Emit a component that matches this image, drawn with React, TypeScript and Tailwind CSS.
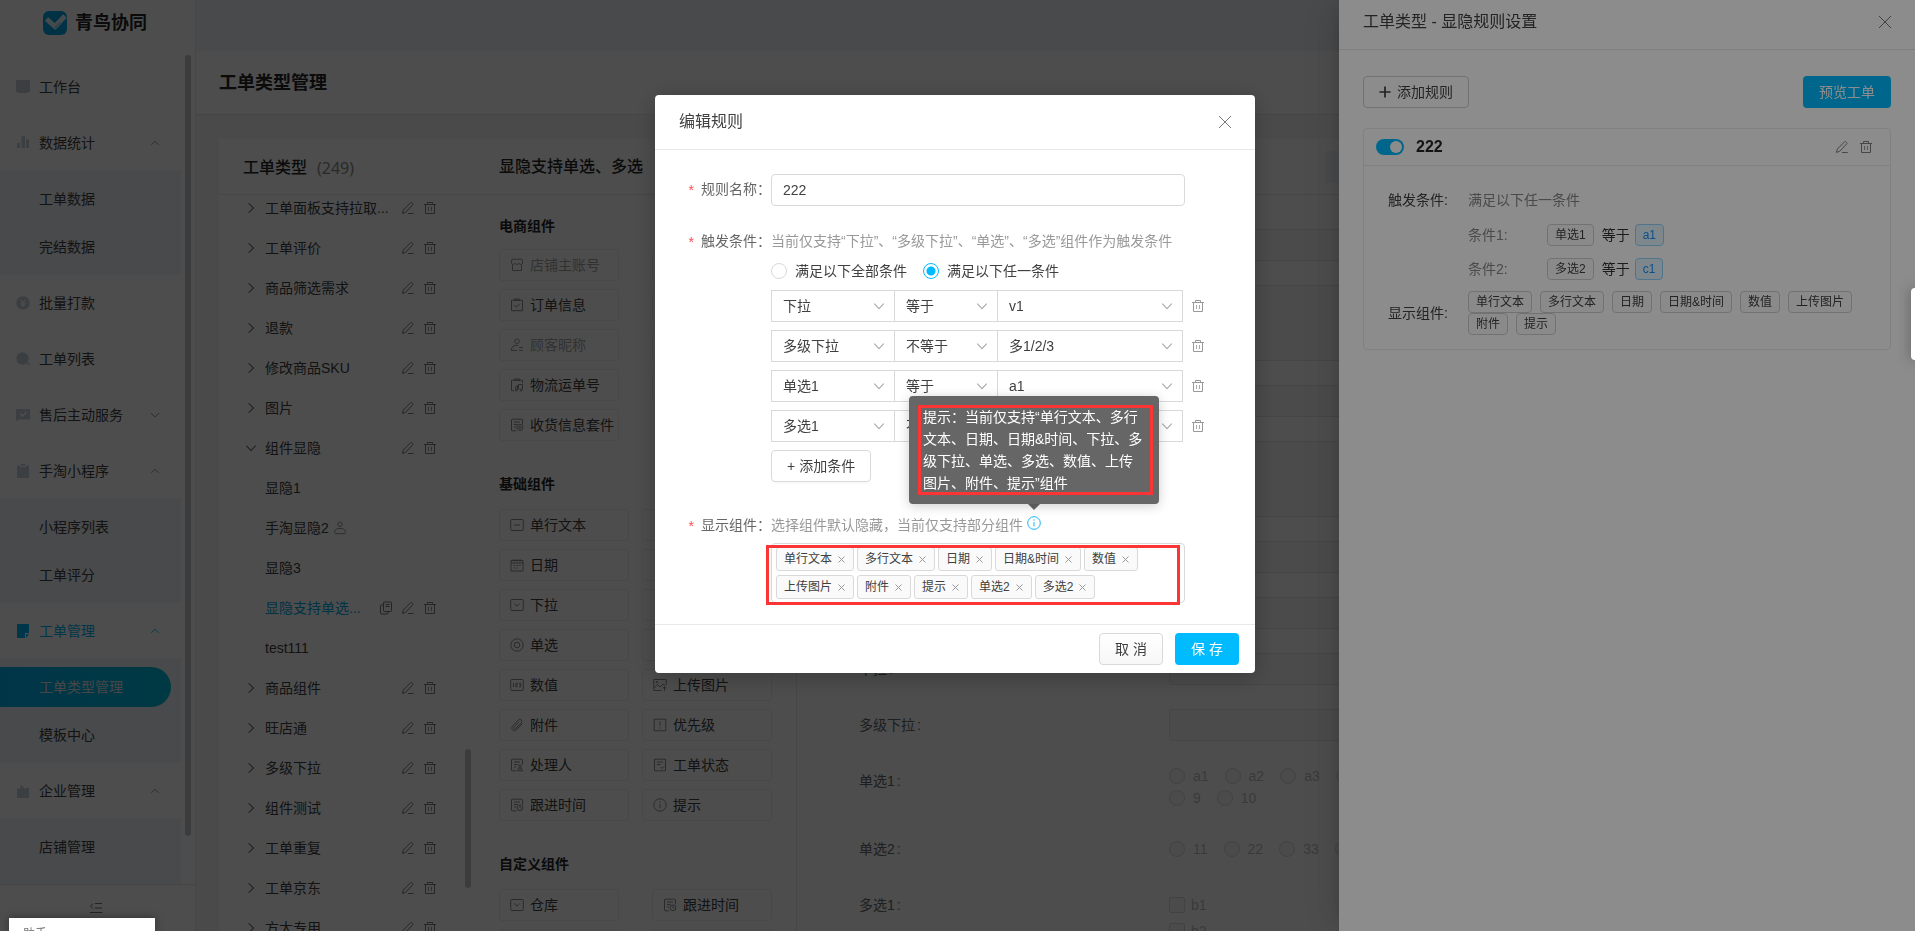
import React, { useState } from 'react';

type IconProps = { className?: string };

const Svg = ({ className = 'size-3.5', children, box = 14 }: { className?: string; children: React.ReactNode; box?: number }) => (
  <svg viewBox={`0 0 ${box} ${box}`} className={`shrink-0 ${className}`} fill="none" stroke="currentColor" strokeWidth="1" aria-hidden="true">
    {children}
  </svg>
);

const EditIcon = ({ className }: IconProps) => (
  <Svg className={className}>
    <path d="M1.4 12.4 2.4 9 9.600 1.700q.6-.6 1.200 0l.9.9q.6.6 0 1.200L4.700 11.300 1.400 12.400ZM7 12.500h5.700" />
  </Svg>
);
const TrashIcon = ({ className }: IconProps) => (
  <Svg className={className}>
    <path d="M1 3.500h12M2.500 3.500v9h9v-9M4.500 3.300V1.500h5v1.800" />
    <path d="M5.500 6v4M8.500 6v4" strokeOpacity=".8" />
  </Svg>
);
const CopyIcon = ({ className }: IconProps) => (
  <Svg className={className}>
    <path d="M5.500 1h6q1 0 1 1v7.500q0 1-1 1h-6q-1 0-1-1V2q0-1 1-1Z" />
    <path d="M4 4H2.500q-1 0-1 1v7q0 1 1 1h5.500q1 0 1-1v-1.300M6.500 3.500h4M6.500 5.500h4" />
  </Svg>
);
const UserIcon = ({ className }: IconProps) => (
  <Svg className={className}>
    <circle cx="7" cy="3.300" r="2.200" />
    <path d="M4.500 7.500h5q3 1 3 4 0 1.200-1.200 1.200H2.700q-1.200 0-1.200-1.200 0-3 3-4Z" />
  </Svg>
);
const Chevron = ({ className = 'size-3', dir }: IconProps & { dir: 'up' | 'down' | 'right' }) => (
  <Svg className={className}>
    <path
      strokeWidth="1.300"
      d={dir === 'up' ? 'M2 9.500 7 4.500l5 5' : dir === 'down' ? 'M1.500 4.200 7 10l5.500-5.800' : 'M4.200 1.500 10 7l-5.800 5.500'}
    />
  </Svg>
);
const CloseIcon = ({ className }: IconProps) => (
  <Svg className={className}>
    <path d="M1 1l12 12M13 1 1 13" />
  </Svg>
);
const InfoIcon = ({ className }: IconProps) => (
  <Svg className={className}>
    <circle cx="7" cy="7" r="6.300" />
    <path d="M7 6v4.500M7 3.300v1.400" />
  </Svg>
);

const sheet = 'M12.500 6.500V2q0-.8-.8-.8H2.300q-.8 0-.8.8v10q0 .8.8.8h4M4 4h6M4 6.500h3.500M4 9h2';
const glyphs: Record<string, React.ReactNode> = {
  shop: <path d="M2.500 7v5.500h9V7M2 1.200h10l.8 3.600q-.4 1.700-2 1.700T8.900 5.200Q8.300 6.500 7 6.500T5.100 5.200Q4.600 6.500 3.200 6.500t-2-1.700Z" />,
  order: <path d="M1.500 2.200h11v10.500h-11ZM4.500 1h5v1.500h-5ZM4.300 7.200l2 2 3.500-3.500" />,
  customer: (
    <>
      <circle cx="7" cy="3.200" r="2.300" />
      <path d="M8 7.300H5Q1.200 8.300 1.200 12.500H7M9 9.500h4M9 12.300h4" />
    </>
  ),
  logistics: (
    <>
      <path d="M12.500 5V2.200h-11v10.500H4M4.500 1h5v1.500h-5Z" />
      <path d="M5.500 11.500V9l2-1.500V11M8.500 11.500v-5h4v5" />
      <circle cx="6.500" cy="12" r="1" />
      <circle cx="11" cy="12" r="1" />
    </>
  ),
  address: (
    <>
      <path d={sheet} />
      <circle cx="10" cy="9.500" r="3" />
      <circle cx="10" cy="9.500" r="1" />
    </>
  ),
  text: (
    <>
      <rect x=".7" y="1.500" width="12.600" height="11" rx="1" />
      <path d="M4 7h6" />
    </>
  ),
  date: <path d="M1 2.500h12v10.500H1ZM1 5h12M4 1v2.500M7 1v2.500M10 1v2.500M3.500 7.500H5M6.300 7.500h1.500M9.200 7.500h1.500M3.500 10H5M6.300 10h1.500" />,
  select: (
    <>
      <rect x=".7" y="1.500" width="12.600" height="11" rx="1" />
      <path d="M4.300 5.500 7 8.200l2.700-2.700" />
    </>
  ),
  radio: (
    <>
      <circle cx="7" cy="7" r="6.200" />
      <circle cx="7" cy="7" r="2.800" />
    </>
  ),
  number: (
    <>
      <rect x=".7" y="1.500" width="12.600" height="11" rx="1" />
      <path d="M3.500 5v4M5.500 5.300h1.800V7H5.700v1.800h1.800M9 5.300h1.800v3.500H9M9.200 7h1.600" />
    </>
  ),
  image: (
    <>
      <path d="M13.200 7V1.500H.8v11h8M1 10l3.500-3.500L7 9l3-3 2 1.500M11.500 13V9M9.700 10.500l1.800-1.800 1.800 1.800" />
      <circle cx="4" cy="4.200" r=".8" />
    </>
  ),
  clip: <path d="M12.300 5.600 6.500 11.700Q4.500 13.500 2.700 12q-1.900-1.800-.2-3.900L8.300 2q1.500-1.300 2.900-.1 1.400 1.400.1 2.900L6 10.300q-.9.700-1.600 0-.7-.800 0-1.600L9.200 3.700" />,
  priority: (
    <>
      <path d="M1.200 1.200h11.600v11.600H1.200Z" />
      <path d="M7 3.500v4.500M7 9.300v1.400" />
    </>
  ),
  handler: (
    <>
      <path d={sheet} />
      <circle cx="10" cy="8.200" r="1.400" />
      <path d="M7.500 12.800q.3-2.600 2.500-2.600t2.600 2.600Z" />
    </>
  ),
  status: <path d="M1.500 1.200h11v11.600h-11ZM4 4h6M4 6.500h3.500M7.500 9l1.500 1.500 2.300-2.300" />,
  time: (
    <>
      <path d={sheet} />
      <circle cx="10" cy="9.800" r="2.900" />
      <path d="M10 8.200v1.800h1.300" />
    </>
  ),
  tip: (
    <>
      <circle cx="7" cy="7" r="6.200" />
      <path d="M7 6v4.500M7 3.300v1.400" />
    </>
  ),
};

const menuGlyphs: Record<string, React.ReactNode> = {
  desk: <path d="M1 0h12q1 0 1 1v10q0 1-1 1h-1v1H2v-1H1q-1 0-1-1V1q0-1 1-1Z" />,
  bars: <path d="M1 7h3v5H1ZM5.500 0h3.500v12H5.500ZM10 3.500h3V12h-3Z" />,
  money: (
    <>
      <circle cx="7" cy="7" r="6.800" />
      <path d="M4.500 3.500 7 6.500l2.500-3M4.500 7h5M4.500 9h5M7 6.500V11" stroke="white" fill="none" />
    </>
  ),
  search: (
    <>
      <circle cx="6.500" cy="6.500" r="6.200" />
      <path d="m10 11 1.500-1.500 2.500 3-.8.800Z" />
    </>
  ),
  message: (
    <>
      <path d="M0 1h14v10.500H3L0 13.500Z" />
      <path d="m4 5.500 2.500 2.500 4-4" stroke="white" strokeWidth="1.500" fill="none" />
    </>
  ),
  clipboard: <path d="M1 1.500h3V3h6V1.500h3V14H1ZM5 0h4v2H5Z" />,
  note: <path d="M1 0h12v9H9v5H1ZM10 10h3l-3 4Z" />,
  company: <path d="M1 14V4l3.500 1V0l4 4.500 4.500-1V14Z" />,
};

type Menu = { name: string; icon: string; arrow?: 'up' | 'down'; active?: boolean; children?: string[] };
const menus: Menu[] = [
  { name: '工作台', icon: 'desk' },
  { name: '数据统计', icon: 'bars', arrow: 'up', children: ['工单数据', '完结数据'] },
  { name: '批量打款', icon: 'money' },
  { name: '工单列表', icon: 'search' },
  { name: '售后主动服务', icon: 'message', arrow: 'down' },
  { name: '手淘小程序', icon: 'clipboard', arrow: 'up', children: ['小程序列表', '工单评分'] },
  { name: '工单管理', icon: 'note', arrow: 'up', active: true, children: ['工单类型管理', '模板中心'] },
  { name: '企业管理', icon: 'company', arrow: 'up', children: ['店铺管理'] },
];

function Sidebar() {
  return (
    <aside className="relative flex w-[196px] shrink-0 flex-col border-r border-[#ececec] bg-white text-sm text-[#404040]">
      <div className="flex h-[55px] shrink-0 items-start gap-2 pt-[11px] pl-[43px]">
        <svg viewBox="0 0 24 24" className="size-6" aria-hidden="true">
          <rect width="24" height="24" rx="6" fill="#00a5e4" />
          <path d="m3.500 8 8.500 7.500L22 5" fill="none" stroke="#e4f7fd" strokeWidth="5" />
          <path d="m12 17.500 6-6" stroke="#a4def5" strokeWidth="3" />
        </svg>
        <span className="text-lg leading-6 font-bold text-[#262626]">青鸟协同</span>
      </div>
      <nav className="min-h-0 flex-1 overflow-hidden pt-1">
        {menus.map((m) => (
          <div key={m.name}>
            <a href="#menu" className={`flex h-14 items-center pl-4 ${m.active ? 'text-[#00b4f0]' : ''}`}>
              <svg viewBox="0 0 14 14" fill="currentColor" className={`mr-[9px] size-3.5 ${m.active ? 'text-[#00b4f0]' : 'text-[#c8d0d8]'}`} aria-hidden="true">
                {menuGlyphs[m.icon]}
              </svg>
              <span className="w-[111px]">{m.name}</span>
              {m.arrow && <Chevron dir={m.arrow} className={`size-2.5 ${m.active ? '' : 'text-[#8c8c8c]'}`} />}
            </a>
            {m.children && (
              <div className={`w-[181px] bg-[#f0f4f9] py-1 ${m.name === '企业管理' ? 'h-[104px]' : ''}`}>
                {m.children.map((c) => (
                  <div key={c} className="flex h-12 items-center">
                    <a
                      href="#sub"
                      className={`flex h-10 w-[171px] items-center rounded-r-full pl-[39px] ${
                        c === '工单类型管理' ? 'bg-linear-to-r from-[#00b0f0] to-[#00bfdf] text-[#e8e8e8]' : ''
                      }`}
                    >
                      {c}
                    </a>
                  </div>
                ))}
              </div>
            )}
          </div>
        ))}
      </nav>
      <div className="flex h-[47px] shrink-0 items-center justify-center border-t border-[#e0e0e0] pr-1 text-[#777]">
        <Svg className="size-3.5">
          <path d="M4 2.500 1.500 5 4 7.500M6 2.500h7M6 7h7M1 11.500h12.500" />
        </Svg>
      </div>
      <div className="absolute top-[55px] right-1 h-[781px] w-1.5 rounded-full bg-[#c8c8c8]" />
    </aside>
  );
}

type Node = { name: string; kind: 'closed' | 'open' | 'leaf'; active?: boolean; user?: boolean };
const tree: Node[] = [
  { name: '工单面板支持拉取...', kind: 'closed' },
  { name: '工单评价', kind: 'closed' },
  { name: '商品筛选需求', kind: 'closed' },
  { name: '退款', kind: 'closed' },
  { name: '修改商品SKU', kind: 'closed' },
  { name: '图片', kind: 'closed' },
  { name: '组件显隐', kind: 'open' },
  { name: '显隐1', kind: 'leaf' },
  { name: '手淘显隐2', kind: 'leaf', user: true },
  { name: '显隐3', kind: 'leaf' },
  { name: '显隐支持单选...', kind: 'leaf', active: true },
  { name: 'test111', kind: 'leaf' },
  { name: '商品组件', kind: 'closed' },
  { name: '旺店通', kind: 'closed' },
  { name: '多级下拉', kind: 'closed' },
  { name: '组件测试', kind: 'closed' },
  { name: '工单重复', kind: 'closed' },
  { name: '工单京东', kind: 'closed' },
  { name: '方太专用', kind: 'closed' },
];

function TypeTree() {
  return (
    <section className="relative flex w-64 shrink-0 flex-col">
      <h2 className="flex h-14 shrink-0 items-center border-b border-[#e8e8e8] pt-0.5 pl-6 text-base font-medium text-[#262626]">
        工单类型<span className="ml-2.5 font-['Noto_Sans'] font-normal text-[#8c8c8c]">(249)</span>
      </h2>
      <ul className="min-h-0 flex-1 overflow-hidden pl-[26px]">
        {tree.map((n, i) => (
          <li key={n.name} className={`flex h-10 items-center text-sm text-[#404040] ${i === 0 ? '-mt-[7px]' : ''}`}>
            <span className="flex w-5 shrink-0 text-[#707070]">
              {n.kind !== 'leaf' && <Chevron dir={n.kind === 'open' ? 'down' : 'right'} className="size-3" />}
            </span>
            <span className={`flex w-[136px] items-center gap-1 whitespace-nowrap ${n.active ? 'text-[#00a8e8]' : ''}`}>
              {n.name}
              {n.user && <UserIcon className="size-3.5 text-[#999]" />}
              {n.active && <CopyIcon className="ml-auto mr-2 size-3.5 text-[#777]" />}
            </span>
            {(n.kind !== 'leaf' || n.active) && (
              <span className="flex gap-2 text-[#808080]">
                <EditIcon className="size-3.5" />
                <TrashIcon className="size-3.5" />
              </span>
            )}
          </li>
        ))}
      </ul>
      <div className="absolute right-1 bottom-[43px] h-[139px] w-1.5 rounded-full bg-[#c8c8c8]" />
    </section>
  );
}

type Part = [string, string, boolean?];
const shopParts: Part[] = [
  ['shop', '店铺主账号', true],
  ['order', '订单信息'],
  ['customer', '顾客昵称', true],
  ['logistics', '物流运单号'],
  ['address', '收货信息套件'],
];
const baseParts: Part[] = [
  ['text', '单行文本'],
  ['date', '日期'],
  ['select', '下拉'],
  ['radio', '单选'],
  ['number', '数值'],
  ['clip', '附件'],
  ['handler', '处理人'],
  ['time', '跟进时间'],
];
const baseRight: (Part | null)[] = [null, null, null, null, ['image', '上传图片'], ['priority', '优先级'], ['status', '工单状态'], ['tip', '提示']];

function PartCard({ part, className }: { part: Part | null; className: string }) {
  return (
    <div className={`flex h-8 items-center rounded-[3px] border border-[#eeeeee] pl-2.5 text-sm ${className} ${part && part[2] ? 'text-[#a6a6a6]' : 'text-[#404040]'}`}>
      {part && (
        <>
          <Svg className={`mr-1.5 size-3.5 ${part[2] ? 'text-[#999]' : 'text-[#8c8c8c]'}`}>{glyphs[part[0]]}</Svg>
          <span className="whitespace-nowrap">{part[1]}</span>
        </>
      )}
    </div>
  );
}

function Palette() {
  return (
    <section className="flex w-[322px] shrink-0 flex-col border-r border-[#e8e8e8]">
      <h2 className="flex h-14 shrink-0 items-center border-b border-[#e8e8e8] pl-6 text-base font-medium whitespace-nowrap text-[#262626]">
        显隐支持单选、多选
      </h2>
      <div className="min-h-0 flex-1 overflow-hidden pt-5 pr-6 pl-6 text-sm">
        <h3 className="mb-3 leading-[22px] font-bold text-[#262626]">电商组件</h3>
        <div className="flex flex-col gap-2">
          {shopParts.map((p, i) => (
            <div key={p[1]} className="flex justify-between">
              <PartCard part={p} className="w-[120px]" />
              {i < 4 && <PartCard part={null} className="w-[120px]" />}
            </div>
          ))}
        </div>
        <h3 className="mt-8 mb-3.5 leading-[22px] font-bold text-[#262626]">基础组件</h3>
        <div className="flex flex-col gap-2">
          {baseParts.map((p, i) => (
            <div key={p[1]} className="flex justify-between">
              <PartCard part={p} className="w-[130px]" />
              <PartCard part={baseRight[i]} className="w-[130px]" />
            </div>
          ))}
        </div>
        <h3 className="mt-8 mb-3.5 leading-[22px] font-bold text-[#262626]">自定义组件</h3>
        <div className="flex flex-col gap-2">
          <div className="flex justify-between">
            <PartCard part={['select', '仓库']} className="w-[120px]" />
            <PartCard part={['time', '跟进时间']} className="w-[120px]" />
          </div>
          <div className="flex justify-between">
            <PartCard part={null} className="w-[120px]" />
            <PartCard part={null} className="w-[120px]" />
          </div>
        </div>
      </div>
    </section>
  );
}

function PreviewRow({ label, children }: { label?: string; children: React.ReactNode }) {
  return (
    <div className="flex">
      <div className="w-[310px] shrink-0 text-sm leading-8 text-[#666]">
        {label}
        {label && <span className="ml-0.5">:</span>}
      </div>
      <div className="flex-1">{children}</div>
    </div>
  );
}

const Field = ({ className = 'h-8' }: IconProps) => <div className={`rounded-[3px] border border-[#e6e6e6] bg-[#f7f7f7] ${className}`} />;

const GhostRadio = ({ text }: { text: string }) => (
  <label className="mr-4 flex items-center gap-2 text-sm leading-[22px] text-[#c0c0c0]">
    <input type="radio" disabled className="size-4 appearance-none rounded-full border border-[#dadada] bg-[#f8f8f8]" />
    {text}
  </label>
);

function Preview() {
  return (
    <section className="flex min-w-0 flex-1 flex-col overflow-hidden">
      <div className="flex h-14 shrink-0 items-center border-b border-[#e8e8e8] pl-[528px]">
        <div className="h-8 w-24 rounded-[3px] bg-[#f0f5fc]" />
      </div>
      <div className="flex flex-col gap-6 pt-[34px] pl-[62px]">
        <PreviewRow><Field /></PreviewRow>
        <PreviewRow><Field className="h-[76px]" /></PreviewRow>
        <PreviewRow><Field /></PreviewRow>
        <PreviewRow><Field className="h-[76px]" /></PreviewRow>
        <PreviewRow><Field /></PreviewRow>
        <PreviewRow><Field /></PreviewRow>
        <PreviewRow label="下拉"><Field /></PreviewRow>
        <PreviewRow label="多级下拉"><Field /></PreviewRow>
        <PreviewRow label="单选1">
          <div className="flex h-[22px]">
            {['a1', 'a2', 'a3', 'a4'].map((t) => <GhostRadio key={t} text={t} />)}
          </div>
          <div className="flex h-[22px]">
            {['9', '10'].map((t) => <GhostRadio key={t} text={t} />)}
          </div>
        </PreviewRow>
        <PreviewRow label="单选2">
          <div className="flex h-8">
            {['11', '22', '33', '44'].map((t) => <GhostRadio key={t} text={t} />)}
          </div>
        </PreviewRow>
        <PreviewRow label="多选1">
          <div className="flex flex-col gap-1 pt-[5px]">
            {['b1', 'b2'].map((t) => (
              <label key={t} className="flex h-[22px] items-center gap-1.5 text-sm text-[#c0c0c0]">
                <input type="checkbox" disabled className="size-4 appearance-none rounded-[2px] border border-[#dadada] bg-[#f8f8f8]" />
                {t}
              </label>
            ))}
          </div>
        </PreviewRow>
      </div>
    </section>
  );
}

const Tag = ({ children, blue }: { children: React.ReactNode; blue?: boolean }) => (
  <span
    className={`h-[22px] rounded-[4px] border px-[7px] text-xs leading-5 whitespace-nowrap ${
      blue ? 'border-[#91d5ff] bg-[#e6f7ff] text-[#1890ff]' : 'border-[#d0d0d0] bg-[#fcfcfc] text-[#404040]'
    }`}
  >
    {children}
  </span>
);

function Drawer() {
  const [on, setOn] = useState(true);
  return (
    <div className="fixed inset-0 flex justify-end bg-black/45">
      <div className="flex w-[576px] flex-col bg-white text-sm text-[#404040] shadow-[-6px_0_16px_-8px_rgba(0,0,0,.15),-9px_0_28px_rgba(0,0,0,.08),-12px_0_48px_16px_rgba(0,0,0,.04)]">
        <header className="flex h-[50px] items-center justify-between border-b border-[#e8e8e8] pr-[23px] pb-1.5 pl-6">
          <h2 className="text-base">工单类型 - 显隐规则设置</h2>
          <button type="button" aria-label="关闭" className="text-[#777]"><CloseIcon className="size-3.5" /></button>
        </header>
        <div className="px-6 pt-[26px]">
          <div className="mb-5 flex justify-between">
            <button type="button" className="flex h-8 items-center gap-1.5 rounded-[4px] border border-[#d0d0d0] px-[15px]">
              <Svg className="size-3"><path d="M7 .5v13M.5 7h13" strokeWidth="2" /></Svg>
              添加规则
            </button>
            <button type="button" className="h-8 rounded-[4px] bg-[#00bbff] px-4 text-white">预览工单</button>
          </div>
          <section className="rounded-[4px] border border-[#ececec]">
            <div className="flex h-[37px] items-center border-b border-[#ececec] pr-[17px] pl-3">
              <button type="button" role="switch" aria-checked={on} aria-label="启用规则" onClick={() => setOn(!on)} className="flex h-4 w-7 items-center justify-end rounded-full bg-[#00bbff] px-0.5">
                <span className="size-3 rounded-full bg-white" />
              </button>
              <h3 className="ml-3 flex-1 text-base font-bold text-[#262626]">222</h3>
              <span className="flex gap-2.5 text-[#808080]">
                <EditIcon className="size-3.5" />
                <TrashIcon className="size-3.5" />
              </span>
            </div>
            <div className="px-6 pt-[23px] pb-3.5">
              <div className="flex">
                <div className="w-20 shrink-0 leading-[22px]">触发条件:</div>
                <div className="text-[#888]">
                  <p className="mb-[13px] leading-[22px]">满足以下任一条件</p>
                  {[['条件1:', '单选1', 'a1'], ['条件2:', '多选2', 'c1']].map(([n, a, b]) => (
                    <div key={n} className="mb-3 flex leading-[22px]">
                      <span className="w-[79px]">{n}</span>
                      <Tag>{a}</Tag>
                      <span className="mr-[5px] ml-2 text-[#333]">等于</span>
                      <Tag blue>{b}</Tag>
                    </div>
                  ))}
                </div>
              </div>
              <div className="-mt-px flex items-center">
                <div className="w-20 shrink-0">显示组件:</div>
                <div className="flex flex-wrap gap-x-2">
                  {['单行文本', '多行文本', '日期', '日期&时间', '数值', '上传图片', '附件', '提示'].map((t) => <Tag key={t}>{t}</Tag>)}
                </div>
              </div>
            </div>
          </section>
        </div>
      </div>
    </div>
  );
}

function Picker({ value, label, className }: { value: string; label: string; className: string }) {
  return (
    <div className={`relative flex items-center ${className}`}>
      <select aria-label={label} className="h-8 w-full appearance-none border border-[#d9d9d9] bg-white pl-[11px] text-sm text-[#404040]">
        <option>{value}</option>
      </select>
      <Chevron dir="down" className="pointer-events-none absolute right-2.5 size-3 text-[#aaa]" />
    </div>
  );
}

const conditions = [
  ['下拉', '等于', 'v1'],
  ['多级下拉', '不等于', '多1/2/3'],
  ['单选1', '等于', 'a1'],
  ['多选1', '不等于', ''],
];

const FormLabel = ({ children, htmlFor }: { children: string; htmlFor?: string }) => (
  <label htmlFor={htmlFor} className="flex w-[116px] shrink-0 justify-end leading-[30px] text-[#666]">
    <span className="mr-[7px] pt-0.5 text-sm leading-7 text-[#ff4d4f]">*</span>
    {children}：
  </label>
);

function InfoTip() {
  return (
    <span className="relative mb-1 ml-1 inline-flex text-[#1bb4f5]">
      <InfoIcon className="size-3.5" />
      <span className="absolute bottom-5 left-1/2 w-[250px] -translate-x-1/2">
        <span className="relative block rounded-[4px] bg-[#666] px-3.5 py-2.5 text-sm leading-[22px] whitespace-nowrap text-white shadow-[0_2px_12px_rgba(0,0,0,.2)]">
          提示：当前仅支持“单行文本、多行<br />文本、日期、日期&amp;时间、下拉、多<br />级下拉、单选、多选、数值、上传<br />图片、附件、提示”组件
          <span className="absolute inset-y-[9px] right-1.5 left-[9px] border-[3px] border-[#fb3535]" />
        </span>
        <svg viewBox="0 0 12 6" className="mx-auto h-1.5 w-3" aria-hidden="true"><path d="M0 0h12L6 6Z" fill="#666" /></svg>
      </span>
    </span>
  );
}

function EditDialog() {
  const [mode, setMode] = useState('any');
  return (
    <div className="fixed inset-0 flex items-start justify-center bg-black/45 pt-[95px] pr-[5px]">
      <div role="dialog" aria-label="编辑规则" className="w-[600px] rounded-[4px] bg-white text-sm text-[#404040] shadow-[0_4px_24px_rgba(0,0,0,.25)]">
        <header className="flex h-[55px] items-center justify-between border-b border-[#e8e8e8] pr-[23px] pl-6">
          <h2 className="text-base text-[#404040]">编辑规则</h2>
          <button type="button" aria-label="关闭" className="text-[#777]"><CloseIcon className="size-3.5" /></button>
        </header>
        <div className="flex flex-col pt-6 pb-[21px]">
          <div className="mb-5 flex">
            <FormLabel htmlFor="rule-name">规则名称</FormLabel>
            <input id="rule-name" defaultValue="222" className="h-8 w-[414px] rounded-[4px] border border-[#d9d9d9] px-[11px] text-sm" />
          </div>
          <div className="flex">
            <FormLabel>触发条件</FormLabel>
            <div>
              <p className="leading-[30px] whitespace-nowrap text-[#999]">当前仅支持“下拉”、“多级下拉”、“单选”、“多选”组件作为触发条件</p>
              <div className="mb-2 flex h-[26px] items-center gap-4 pt-1">
                {[['all', '满足以下全部条件'], ['any', '满足以下任一条件']].map(([v, t]) => (
                  <label key={v} className="flex items-center gap-2">
                    <input
                      type="radio"
                      name="mode"
                      checked={mode === v}
                      onChange={() => setMode(v)}
                      className="size-4 appearance-none rounded-full border border-[#d9d9d9] checked:border-[#00bbff] checked:bg-[radial-gradient(circle,#00bbff_4px,white_5px)]"
                    />
                    {t}
                  </label>
                ))}
              </div>
              <div className="flex flex-col gap-2">
                {conditions.map(([a, b, c]) => (
                  <div key={a} className="flex items-center">
                    <Picker label="组件" value={a} className="w-[124px]" />
                    <Picker label="关系" value={b} className="-ml-px w-[104px]" />
                    <Picker label="取值" value={c} className="-ml-px w-[186px]" />
                    <button type="button" aria-label="删除条件" className="ml-2 text-[#999]"><TrashIcon className="size-3.5" /></button>
                  </div>
                ))}
                <button type="button" className="flex h-8 items-center gap-1 self-start rounded-[4px] border border-[#d9d9d9] px-[15px] shadow-[0_2px_0_rgba(0,0,0,.02)]">
                  <span>+</span>添加条件
                </button>
              </div>
            </div>
          </div>
          <div className="mt-7 flex">
            <FormLabel>显示组件</FormLabel>
            <div>
              <p className="flex items-center leading-[30px] text-[#999]">
                选择组件默认隐藏，当前仅支持部分组件
                <InfoTip />
              </p>
              <div className="relative mt-[3px] flex h-[60px] w-[414px] flex-wrap content-start gap-x-[3px] gap-y-1 rounded-[4px] border border-[#d9d9d9] py-[3px] pr-10 pl-1">
                {['单行文本', '多行文本', '日期', '日期&时间', '数值', '上传图片', '附件', '提示', '单选2', '多选2'].map((t) => (
                  <span key={t} className="flex h-6 items-center gap-1.5 rounded-[3px] border border-[#d9d9d9] bg-[#fafafa] pr-2 pl-[7px] text-xs">
                    {t}
                    <button type="button" aria-label={`移除${t}`} className="text-[#999]"><CloseIcon className="size-[7px] stroke-2" /></button>
                  </span>
                ))}
                <div className="pointer-events-none absolute top-px -left-1.5 h-[60px] w-[414px] border-[3px] border-[#fb3535]" />
              </div>
            </div>
          </div>
        </div>
        <footer className="flex justify-end gap-3 border-t border-[#e8e8e8] px-4 py-2">
          <button type="button" className="h-8 w-16 rounded-[4px] border border-[#d9d9d9] bg-linear-to-b from-white to-[#f7f7f7]">取 消</button>
          <button type="button" className="h-8 w-16 rounded-[4px] bg-[#00bbff] text-white">保 存</button>
        </footer>
      </div>
    </div>
  );
}

export default function App() {
  return (
    <div className="flex h-screen overflow-hidden bg-[#f6f6f6] font-['Liberation_Sans','Noto_Sans_CJK_SC',sans-serif]">
      <Sidebar />
      <main className="flex min-w-0 flex-1 flex-col">
        <div className="h-[51px] shrink-0 bg-[#f1f4f8]" />
        <div className="flex h-16 shrink-0 items-center border-b border-[#e8e8e8] bg-white pl-[23px]">
          <h1 className="text-lg font-bold text-[#262626]">工单类型管理</h1>
        </div>
        <div className="mt-6 ml-[23px] flex min-h-0 flex-1 overflow-hidden bg-white">
          <TypeTree />
          <Palette />
          <Preview />
        </div>
      </main>
      <Drawer />
      <EditDialog />
      <div className="fixed top-[288px] right-0 h-[72px] w-1 rounded-l bg-white shadow-[0_0_12px_rgba(0,0,0,.5)]" />
      <div className="fixed bottom-0 left-[9px] h-[13px] w-[146px] overflow-hidden bg-white pt-2 pl-3.5 text-xs text-[#777] shadow-[0_0_8px_rgba(0,0,0,.4)]">
        助手
      </div>
    </div>
  );
}
